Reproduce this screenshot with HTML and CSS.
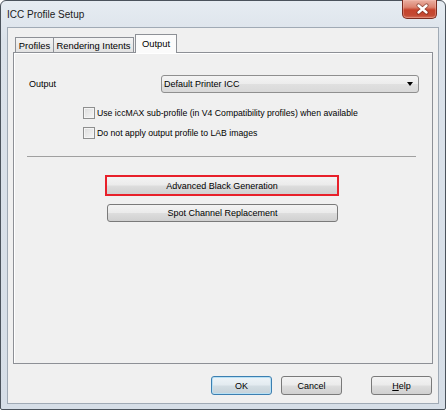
FILE: index.html
```html
<!DOCTYPE html>
<html>
<head>
<meta charset="utf-8">
<link rel="stylesheet" href="styles.css">
</head>
<body>
<div class="window">
  <div class="titlebar">
    <span class="title">ICC Profile Setup</span>
    <div class="close">
      <svg width="35" height="18" viewBox="0 0 35 18">
        <path d="M15.5 5.5 L23.5 12.5 M23.5 5.5 L15.5 12.5" stroke="#5a1f14" stroke-opacity="0.55" stroke-width="4.2" stroke-linecap="round" fill="none"/>
        <path d="M15.5 5.5 L23.5 12.5 M23.5 5.5 L15.5 12.5" stroke="#ffffff" stroke-width="2.4" stroke-linecap="round" fill="none"/>
      </svg>
    </div>
  </div>
  <div class="client">
    <div class="tabs">
      <div class="tab tab-profiles">Profiles</div>
      <div class="tab tab-rendering">Rendering Intents</div>
      <div class="tab tab-output active">Output</div>
    </div>
    <div class="panel">
      <div class="output-row">
        <span class="label">Output</span>
        <div class="select"><span>Default Printer ICC</span><span class="arrow"></span></div>
      </div>
      <div class="checks">
        <div class="check"><span class="box"></span><span>Use iccMAX sub-profile (in V4 Compatibility profiles) when available</span></div>
        <div class="check"><span class="box"></span><span>Do not apply output profile to LAB images</span></div>
      </div>
      <div class="sep"></div>
      <div class="btn wide highlight">Advanced Black Generation</div>
      <div class="btn wide spot">Spot Channel Replacement</div>
    </div>
    <div class="footer">
      <div class="btn dlg default">OK</div>
      <div class="btn dlg cancel">Cancel</div>
      <div class="btn dlg help"><u>H</u>elp</div>
    </div>
  </div>
</div>
</body>
</html>
```
FILE: styles.css
```css
html, body {
  margin: 0;
  padding: 0;
  background: #ffffff;
}
body {
  font-family: "Liberation Sans", Arial, sans-serif;
  font-size: 9px;
  color: #000;
}
.window {
  width: 446px;
  height: 410px;
  box-sizing: border-box;
  border: 1px solid #4b535c;
  border-radius: 6px 6px 2px 2px;
  background: linear-gradient(#e6ecf2, #dbe2ea 40px, #d6dee7);
  padding: 0 6px 5px 6px;
  display: flex;
  flex-direction: column;
}
.titlebar {
  height: 26px;
  display: flex;
  align-items: flex-start;
}
.title {
  font-size: 10px;
  line-height: 12px;
  margin-top: 8px;
  color: #1b1b1b;
}
.close {
  margin-left: auto;
  margin-right: 2px;
  margin-top: -1px;
  width: 35px;
  height: 19px;
  box-sizing: border-box;
  border: 1px solid #7b2c20;
  border-top: none;
  border-radius: 0 0 5px 5px;
  background: linear-gradient(#eab0a2, #dc8370 40%, #c6432c 55%, #c44a33 85%, #d5725c);
  box-shadow: inset 0 0 0 1px rgba(255, 200, 190, 0.35);
}
.close svg {
  display: block;
}
.client {
  flex: 1;
  border: 1px solid #a0aab5;
  background: #f0f0f0;
  display: flex;
  flex-direction: column;
  padding: 6px 5px 0 5px;
}
.tabs {
  display: flex;
  align-items: flex-end;
  height: 19px;
  padding-left: 2px;
  margin-bottom: -1px;
  position: relative;
  z-index: 1;
}
.tab {
  height: 15px;
  box-sizing: border-box;
  border: 1px solid #8d9096;
  border-bottom: none;
  background: linear-gradient(#f4f4f4, #e2e2e2);
  margin-bottom: 1px;
  display: flex;
  align-items: center;
  justify-content: center;
  padding-top: 1px;
  font-size: 9.4px;
}
.tab-profiles {
  width: 39px;
}
.tab-rendering {
  width: 81px;
  margin-left: -1px;
}
.tab-output {
  width: 42px;
  margin-left: 1px;
}
.tab.active {
  height: 19px;
  margin-bottom: 0;
  background: #fbfbfb;
  align-items: flex-start;
  padding-top: 3px;
}
.panel {
  height: 312px;
  box-sizing: border-box;
  border: 1px solid #8d9096;
  background: #f0f0f0;
  box-shadow: inset 1px 1px 0 #ffffff;
}
.output-row {
  display: flex;
  align-items: center;
  margin-top: 22px;
  padding-left: 15px;
  height: 18px;
}
.label {
  width: 132px;
}
.select {
  width: 258px;
  height: 18px;
  box-sizing: border-box;
  border: 1px solid #8f8f8f;
  border-radius: 3px;
  background: linear-gradient(#f4f4f4, #ececec 50%, #e0e0e0 50%, #d9d9d9);
  display: flex;
  align-items: center;
  padding-left: 2px;
}
.arrow {
  margin-left: auto;
  margin-right: 5px;
  width: 0;
  height: 0;
  border-left: 3px solid transparent;
  border-right: 3px solid transparent;
  border-top: 4px solid #000;
}
.checks {
  margin-top: 10px;
  padding-left: 69px;
  font-size: 8.7px;
}
.check {
  height: 20px;
  display: flex;
  align-items: center;
}
.box {
  width: 12px;
  height: 12px;
  box-sizing: border-box;
  border: 1px solid #8e8f8f;
  background: linear-gradient(135deg, #dcdcdc, #f6f6f6);
  box-shadow: inset 0 0 0 1px #f4f4f4;
  margin-right: 2px;
}
.sep {
  margin: 13px 0 0 13px;
  width: 389px;
  border-top: 1px solid #a0a0a0;
}
.btn {
  box-sizing: border-box;
  border: 1px solid #7a7a7a;
  border-radius: 3px;
  background: linear-gradient(#f3f3f3, #ebebeb 48%, #dddddd 52%, #d0d0d0);
  display: flex;
  align-items: center;
  justify-content: center;
}
.wide.highlight {
  margin: 18px 0 0 91px;
  width: 234px;
  height: 21px;
  border: 2px solid #e8202a;
  border-radius: 0;
}
.wide.spot {
  margin: 8px 0 0 93px;
  width: 231px;
  height: 18px;
}
.footer {
  display: flex;
  justify-content: flex-end;
  margin-top: 12px;
  margin-right: 1px;
}
.dlg {
  width: 61px;
  height: 19px;
}
.default {
  border-color: #3c7fb1;
  box-shadow: inset 0 0 0 1px #b8e0f4;
  background: linear-gradient(#eef4f8, #e3ebf0 48%, #d3dde3 52%, #c6d2d9);
}
.cancel {
  margin-left: 9px;
}
.help {
  margin-left: 29px;
}
u {
  text-decoration: underline;
}
```
